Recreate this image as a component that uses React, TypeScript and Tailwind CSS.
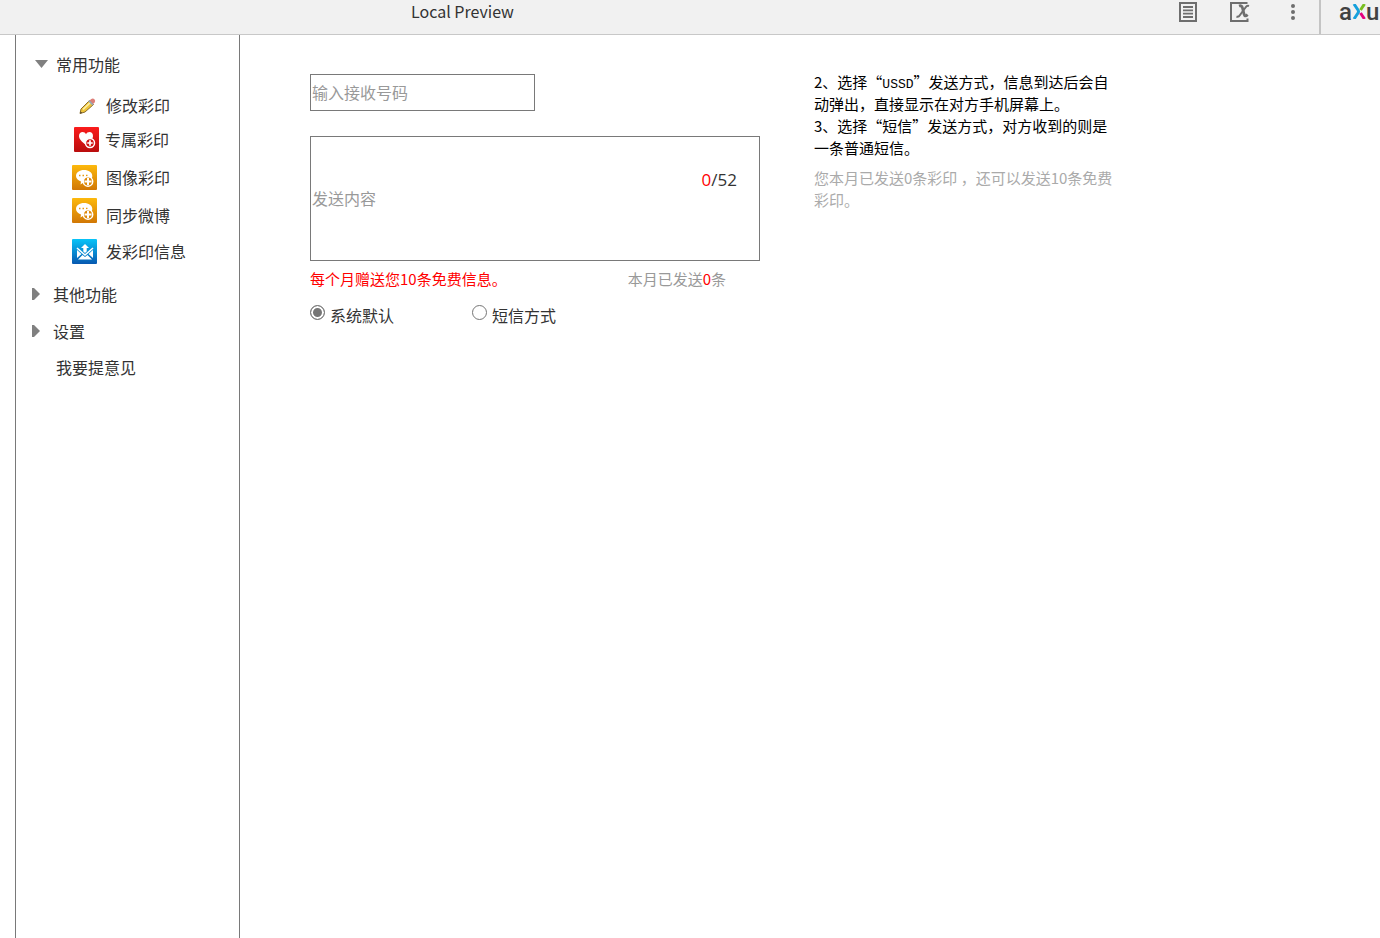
import React, { useState } from "react";

const MAX_LENGTH = 52;

function PencilIcon() {
  return (
    <svg viewBox="0 0 25 25" className="w-[25px] h-[25px]" aria-hidden="true">
      <path d="M6 16 14.500 7.500l4 4L10 19l-5 1.500z" fill="#efc53c" stroke="#8a6d2c" strokeWidth="1" strokeLinejoin="round" />
      <path d="M8 16.500 16 9" stroke="#fdf0a8" strokeWidth="1.700" />
      <path d="m14.500 7.500 1.800-1.600q1.900-.9 3.300.6 1.200 1.500 0 3.100l-1.600 1.700z" fill="#dd7e78" />
      <path d="m13.700 7.700 4.200 4.200" stroke="#9aa7b3" strokeWidth="1.700" />
      <path d="m5 20.500 2.200-.6-1.500-1.500z" fill="#4b4030" />
    </svg>
  );
}

function HeartIcon() {
  return (
    <svg viewBox="0 0 25 25" className="w-[25px] h-[25px]" aria-hidden="true">
      <defs>
        <linearGradient id="heart-bg" x1="0" y1="0" x2="0" y2="1">
          <stop offset="0" stopColor="#fb1c1c" />
          <stop offset="1" stopColor="#b90d0d" />
        </linearGradient>
      </defs>
      <rect width="25" height="25" rx="1" fill="url(#heart-bg)" />
      <path d="M12 18C7.500 14.500 5 12 5 9c0-2.400 1.600-4 3.600-4 1.500 0 2.700.8 3.400 2.200C12.700 5.800 14 5 15.500 5 17.500 5 19 6.600 19 9c0 3-2.500 5.500-7 9z" fill="#fff" />
      <circle cx="16" cy="16" r="4.500" fill="#d01212" stroke="#fff" strokeWidth="1.500" />
      <path d="M16 13.300v5.400M13.300 16h5.400" stroke="#fff" strokeWidth="1.700" />
    </svg>
  );
}

function ChatIcon() {
  return (
    <svg viewBox="0 0 25 25" className="w-[25px] h-[25px]" aria-hidden="true">
      <defs>
        <linearGradient id="chat-bg" x1="0" y1="0" x2="0" y2="1">
          <stop offset="0" stopColor="#fdb90c" />
          <stop offset="1" stopColor="#d17705" />
        </linearGradient>
      </defs>
      <rect width="25" height="25" rx="1" fill="url(#chat-bg)" />
      <path d="M12 5c4.700 0 8.300 2.500 8.300 6S17 16.800 12.500 17L8.500 19.500 9 16.500C6 15.500 4 13.600 4 11c0-3.500 3.500-6 8-6z" fill="#fff" />
      <path d="M7 10.500h1.500M10.500 10.500H12M14 10.500h1.500" stroke="#e89a10" strokeWidth="1.500" />
      <circle cx="16" cy="16.500" r="4.700" fill="#dd8808" stroke="#fff" strokeWidth="1.500" />
      <path d="M16 13v7M12.500 16.500h7" stroke="#fff" strokeWidth="2" />
    </svg>
  );
}

function MailIcon() {
  return (
    <svg viewBox="0 0 25 25" className="w-[25px] h-[25px]" aria-hidden="true">
      <defs>
        <linearGradient id="mail-bg" x1="0" y1="0" x2="0" y2="1">
          <stop offset="0" stopColor="#08c4f8" />
          <stop offset="1" stopColor="#0758b0" />
        </linearGradient>
      </defs>
      <rect width="25" height="25" rx="1" fill="url(#mail-bg)" />
      <path d="M5 11v8l4.500-4zM21 11v8l-4.500-4zM6 20.500l4.500-4.500 2.500 2 2.500-2 4.500 4.500z" fill="#fff" />
      <path d="m5 9 8 7 8-7" fill="none" stroke="#fff" strokeWidth="1.600" />
      <path d="m13 5 4 4h-2.300v3.500L13 14l-1.700-1.500V9H9z" fill="#fff" />
    </svg>
  );
}

const commonItems = [
  { label: "修改彩印", icon: PencilIcon, row: "h-[34px] items-center pl-[59px]", gap: "gap-[6px]" },
  { label: "专属彩印", icon: HeartIcon, row: "h-[34px] items-center pl-[58px]", gap: "gap-[6px]" },
  { label: "图像彩印", icon: ChatIcon, row: "h-[42px] items-center pl-[56px]", gap: "gap-[9px]" },
  { label: "同步微博", icon: ChatIcon, row: "h-[34px] items-start pl-[56px]", gap: "gap-[9px]" },
  { label: "发彩印信息", icon: MailIcon, row: "h-[38px] items-center pl-[56px]", gap: "gap-[9px]" },
];

function Header() {
  return (
    <header className="flex shrink-0 h-[35px] border-b border-[#c8c8c8] bg-[#f1f1f1]">
      <h1 className="flex-1 pl-[411px] text-[16px] leading-[22px] text-[#333]">Local Preview</h1>
      <div className="flex items-start pr-5">
        <button type="button" aria-label="Notes" className="mt-[2px] mr-[33px]">
          <svg viewBox="0 0 18 20" className="w-[18px] h-[20px]" fill="none" stroke="#6e6e6e" strokeWidth="2">
            <path d="M1 1h16v18H1z" />
            <path d="M4 5h10M4 8.300h10M4 11.600h10M4 15h10" strokeWidth="1.800" />
          </svg>
        </button>
        <button type="button" aria-label="Variables" className="mt-[2px] mr-[33px]">
          <svg viewBox="0 0 20 20" className="w-[20px] h-[20px]" fill="none" stroke="#6e6e6e">
            <path d="M17.500 1H1v18h16.500v-2.500" strokeWidth="2" />
            <path d="M9 4q2.700-1 3.500 2l1.500 6q1 3.500 3.500.5" strokeWidth="2.800" />
            <path d="M19 4q-2-.8-3.500 1.500L10 13q-1.500 2.500-3.500 1.500" strokeWidth="2" />
          </svg>
        </button>
        <button type="button" aria-label="More" className="mt-[3px]">
          <svg viewBox="0 0 16 18" className="w-[16px] h-[18px]" fill="#6e6e6e">
            <circle cx="10" cy="3" r="2" />
            <circle cx="10" cy="9" r="2" />
            <circle cx="10" cy="15" r="2" />
          </svg>
        </button>
      </div>
      <div className="flex items-start w-[61px] pl-[18px] border-l-2 border-[#c4c4c4] font-['Roboto',sans-serif] text-[24px] leading-[24px] font-medium text-[#414141]">
        <span>a</span>
        <svg viewBox="0 0 14 15" className="shrink-0 w-[14px] h-[15px] mt-[4px]" fill="none" strokeWidth="3" aria-label="x">
          <path d="M2 0 6 6Q7 7.500 6 9L2 15" stroke="#16a0dc" />
          <path d="M12.500 0 8.500 6" stroke="#78be20" />
          <path d="M8.500 9 12.500 15" stroke="#e6007e" />
        </svg>
        <span>u</span>
      </div>
    </header>
  );
}

function Sidebar() {
  return (
    <nav className="shrink-0 w-[225px] border-x border-[#797979] pt-[11px]">
      <button type="button" className="flex items-center h-9 pl-[19px]">
        <svg viewBox="0 0 13 8" className="w-[13px] h-[8px] -mt-px" fill="#808080" aria-hidden="true">
          <path d="M0 0h13L6.500 8z" />
        </svg>
        <span className="ml-2">常用功能</span>
      </button>
      <ul className="mt-[6px]">
        {commonItems.map(({ label, icon: Icon, row, gap }) => (
          <li key={label}>
            <a href="#" className={`flex ${row} ${gap}`}>
              <Icon />
              <span className="self-center">{label}</span>
            </a>
          </li>
        ))}
      </ul>
      <div className="mt-[5px]">
        {["其他功能", "设置"].map((label) => (
          <button key={label} type="button" className="flex items-center w-full h-[37px] pl-4">
            <svg viewBox="0 0 8 12" className="w-[8px] h-[12px]" fill="#808080" aria-hidden="true">
              <path d="M0 0h2l6 6-6 6H0z" />
            </svg>
            <span className="ml-[13px]">{label}</span>
          </button>
        ))}
        <a href="#" className="flex items-center h-9 pl-10">我要提意见</a>
      </div>
    </nav>
  );
}

export default function App() {
  const [phone, setPhone] = useState("");
  const [content, setContent] = useState("");
  const [mode, setMode] = useState("default");

  const modes = [
    { id: "default", label: "系统默认" },
    { id: "sms", label: "短信方式" },
  ];

  return (
    <div className="flex flex-col min-h-screen bg-white font-['Noto_Sans_CJK_SC',sans-serif] text-[16px] leading-[24px] text-[#333]">
      <Header />
      <div className="flex flex-1 pl-[15px]">
        <Sidebar />
        <main className="flex flex-1 items-start pl-[70px] pt-[39px]">
          <form className="w-[450px] shrink-0" onSubmit={(e) => e.preventDefault()}>
            <input
              type="tel"
              aria-label="输入接收号码"
              placeholder="输入接收号码"
              value={phone}
              onChange={(e) => setPhone(e.target.value)}
              className="block w-[225px] h-[37px] px-px pb-[2px] border border-[#797979] placeholder:text-[#999]"
            />
            <div className="relative mt-[25px]">
              <textarea
                aria-label="发送内容"
                placeholder="发送内容"
                maxLength={MAX_LENGTH}
                value={content}
                onChange={(e) => setContent(e.target.value)}
                className="block w-full h-[125px] px-px pt-[49px] border border-[#797979] resize-none placeholder:text-[#999]"
              />
              <span className="absolute top-8 right-[23px] font-['Open_Sans',sans-serif] text-[17px]">
                <span className="text-[#f00]">{content.length}</span>/{MAX_LENGTH}
              </span>
            </div>
            <div className="flex justify-between pr-[34px] mt-[6px] text-[15px]">
              <p className="text-[#f00]">每个月赠送您10条免费信息。</p>
              <p className="text-[#999]">
                本月已发送<span className="text-[#f00]">0</span>条
              </p>
            </div>
            <div className="flex mt-3">
              {modes.map(({ id, label }) => (
                <label key={id} className="flex items-start w-[162px] gap-[5px]">
                  <input
                    type="radio"
                    name="mode"
                    checked={mode === id}
                    onChange={() => setMode(id)}
                    className="w-[15px] h-[15px] mt-[2px] appearance-none rounded-full border border-[#767676] bg-white checked:bg-[#767676] checked:shadow-[inset_0_0_0_2px_white]"
                  />
                  <span>{label}</span>
                </label>
              ))}
            </div>
          </form>
          <aside className="ml-[54px] -mt-[3px] text-[15px] leading-[22px] whitespace-nowrap">
            <p className="text-black">
              2、选择“<span className="font-['Liberation_Mono',monospace] text-[13px] leading-none">USSD</span>”发送方式，信息到达后会自
              <br />
              动弹出，直接显示在对方手机屏幕上。
              <br />
              3、选择“短信”发送方式，对方收到的则是
              <br />
              一条普通短信。
            </p>
            <p className="mt-2 text-[#aaa]">
              您本月已发送0条彩印 ，还可以发送10条免费
              <br />
              彩印。
            </p>
          </aside>
        </main>
      </div>
    </div>
  );
}
